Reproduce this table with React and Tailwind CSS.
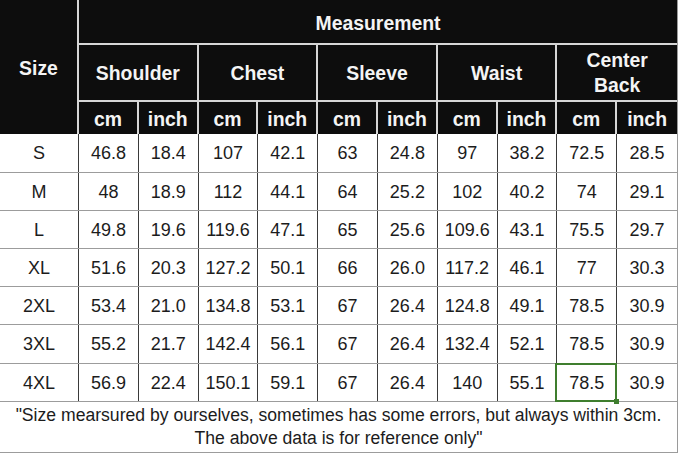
import React from "react";

const rows = [
  ["S", "46.8", "18.4", "107", "42.1", "63", "24.8", "97", "38.2", "72.5", "28.5"],
  ["M", "48", "18.9", "112", "44.1", "64", "25.2", "102", "40.2", "74", "29.1"],
  ["L", "49.8", "19.6", "119.6", "47.1", "65", "25.6", "109.6", "43.1", "75.5", "29.7"],
  ["XL", "51.6", "20.3", "127.2", "50.1", "66", "26.0", "117.2", "46.1", "77", "30.3"],
  ["2XL", "53.4", "21.0", "134.8", "53.1", "67", "26.4", "124.8", "49.1", "78.5", "30.9"],
  ["3XL", "55.2", "21.7", "142.4", "56.1", "67", "26.4", "132.4", "52.1", "78.5", "30.9"],
  ["4XL", "56.9", "22.4", "150.1", "59.1", "67", "26.4", "140", "55.1", "78.5", "30.9"],
];

const rowHeights = ["h-[39px]", "h-[38px]", "h-[38px]", "h-[38px]", "h-[38px]", "h-[39px]", "h-[38px]"];

const groups = ["Shoulder", "Chest", "Sleeve", "Waist", "Center Back"];

export default function App() {
  return (
    <div className="w-[679px] h-[456px] bg-white font-['Liberation_Sans',Arial,sans-serif] overflow-hidden">
      <div className="w-[678px] border-r border-[#9a9a9a]">
        {/* Header */}
        <div className="grid grid-cols-[79px_repeat(10,minmax(0,1fr))] grid-rows-[45px_57px_32px] bg-[#0d0d0d] text-[#f4f4f4] font-bold text-[19.4px] leading-[24px]">
          <div className="row-span-3 flex items-center justify-center border-r-2 border-[#d6d6d6] pt-[1px]">Size</div>
          <div className="col-span-10 flex items-center justify-center border-b-2 border-[#d6d6d6] pt-[2px]">Measurement</div>
          {groups.map((g, i) => (
            <div
              key={g}
              className={`col-span-2 flex items-center justify-center text-center border-b-2 border-[#d6d6d6] pt-[1px] ${i < 4 ? "border-r-2" : ""}`}
            >
              {g === "Center Back" ? (
                <span className="leading-[25px]">Center<br />Back</span>
              ) : (
                g
              )}
            </div>
          ))}
          {groups.map((g, i) => (
            <React.Fragment key={g + "u"}>
              <div className="flex items-center justify-center border-r-2 border-[#d6d6d6] pt-[2px]">cm</div>
              <div className={`flex items-center justify-center pt-[2px] ${i < 4 ? "border-r-2 border-[#d6d6d6]" : ""}`}>inch</div>
            </React.Fragment>
          ))}
        </div>

        {/* Body */}
        {rows.map((r, ri) => (
          <div
            key={r[0]}
            className={`grid grid-cols-[79px_repeat(10,minmax(0,1fr))] ${rowHeights[ri]} border-b border-[#9c9c9c] text-[18px] text-[#1c1c1c]`}
          >
            {r.map((c, ci) => (
              <div
                key={ci}
                className={`relative flex items-center justify-center pt-[1px] ${ci < 10 ? "border-r border-[#3a3a3a]" : ""}`}
              >
                {c}
                {ri === 6 && ci === 9 && (
                  <div className="absolute -left-[2px] -top-[1px] -right-[1px] -bottom-[1px] border-2 border-[#3f7e2e]">
                    <div className="absolute -right-[4px] -bottom-[4px] w-[5px] h-[5px] bg-[#3f7e2e]" />
                  </div>
                )}
              </div>
            ))}
          </div>
        ))}

        {/* Footer */}
        <div className="h-[51px] border-b border-[#9c9c9c] flex flex-col items-center justify-center text-[17.6px] leading-[23px] text-[#1c1c1c]">
          <div>"Size mearsured by ourselves, sometimes has some errors, but always within 3cm.</div>
          <div>The above data is for reference only"</div>
        </div>
      </div>
    </div>
  );
}
